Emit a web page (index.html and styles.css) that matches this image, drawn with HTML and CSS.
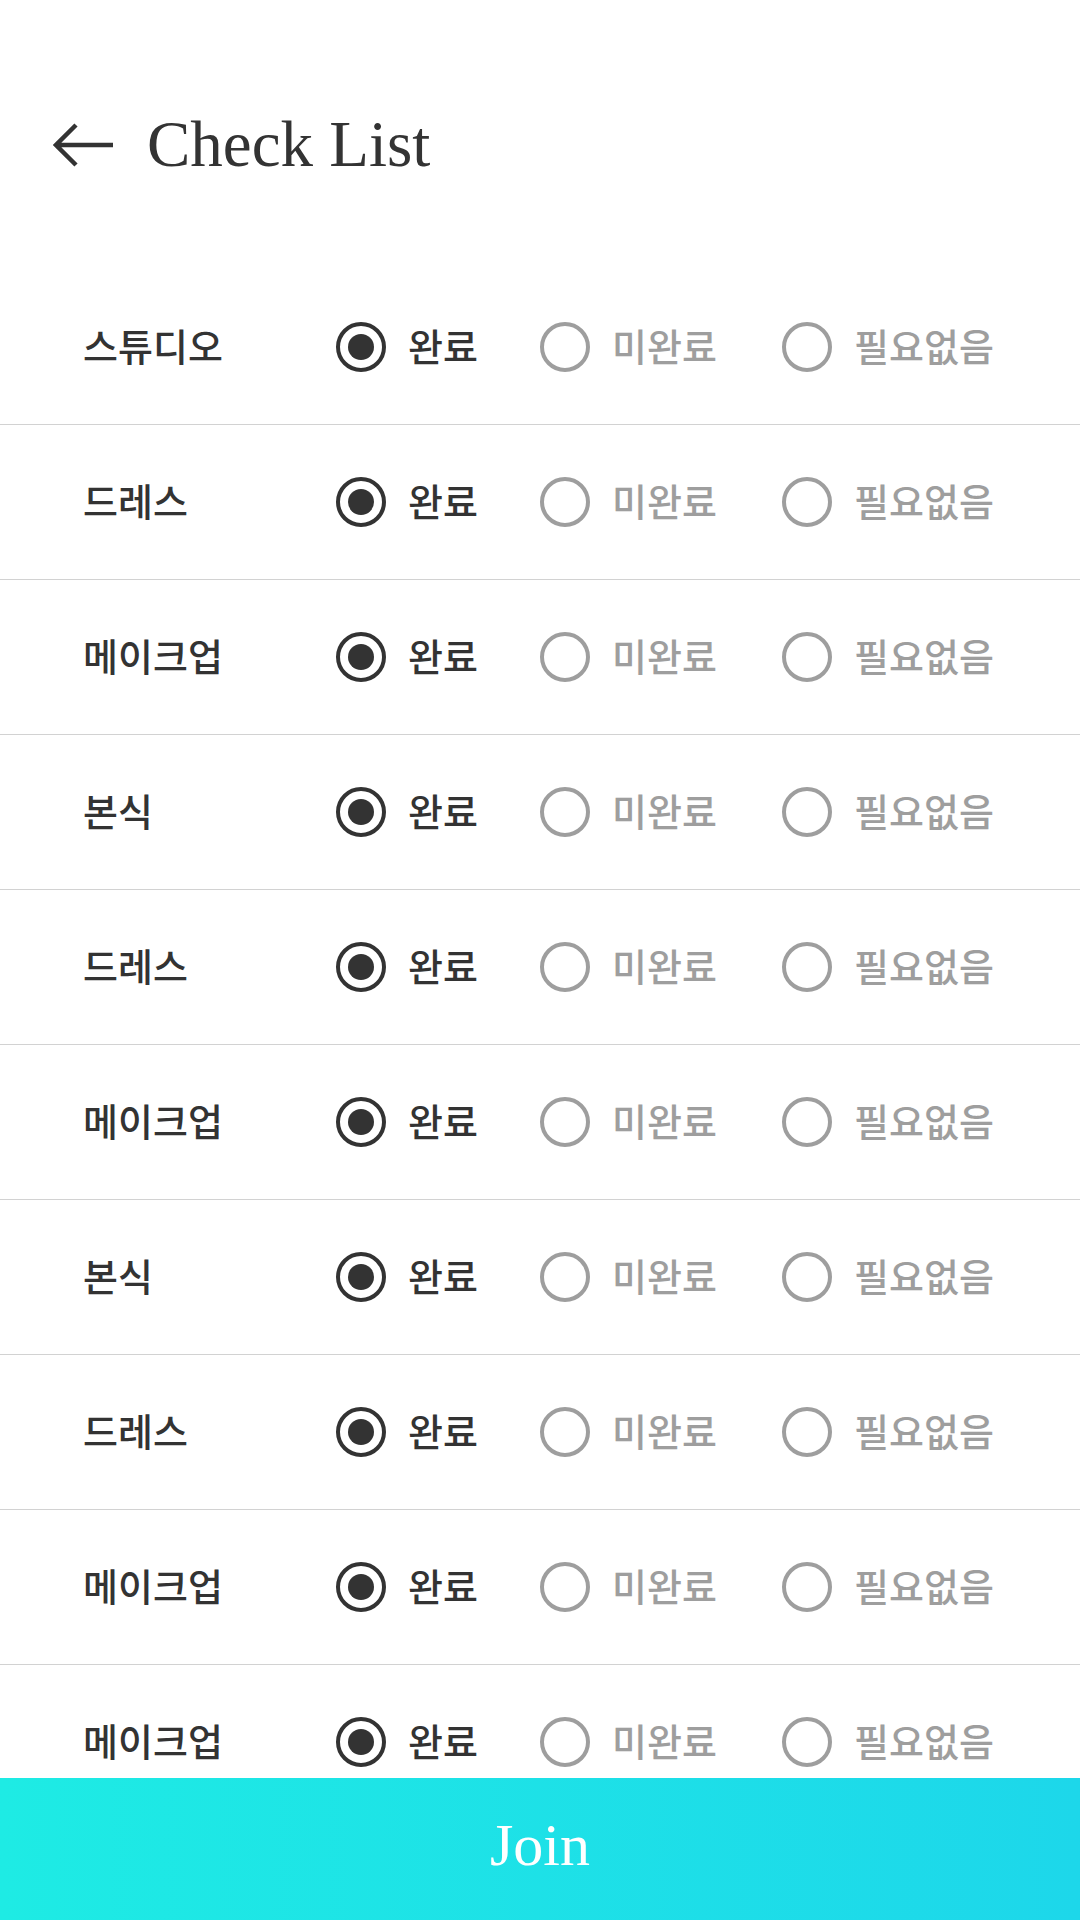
FILE: index.html
```html
<!DOCTYPE html>
<html lang="ko">
<head>
<meta charset="utf-8">
<title>Check List</title>
<link rel="stylesheet" href="styles.css">
</head>
<body>
<header class="header">
  <svg class="back" width="60" height="46" viewBox="0 0 60 46" aria-hidden="true">
    <path d="M60 23 H4 M23 3 L3 23 L23 43" fill="none" stroke="#333" stroke-width="4.5" stroke-linejoin="miter"/>
  </svg>
  <h1 class="title">Check List</h1>
</header>
<main class="list">
  <div class="row"><span class="label">스튜디오</span><span class="opt on"><i class="radio"></i><span class="txt">완료</span></span><span class="opt"><i class="radio"></i><span class="txt">미완료</span></span><span class="opt"><i class="radio"></i><span class="txt">필요없음</span></span></div>
  <div class="row"><span class="label">드레스</span><span class="opt on"><i class="radio"></i><span class="txt">완료</span></span><span class="opt"><i class="radio"></i><span class="txt">미완료</span></span><span class="opt"><i class="radio"></i><span class="txt">필요없음</span></span></div>
  <div class="row"><span class="label">메이크업</span><span class="opt on"><i class="radio"></i><span class="txt">완료</span></span><span class="opt"><i class="radio"></i><span class="txt">미완료</span></span><span class="opt"><i class="radio"></i><span class="txt">필요없음</span></span></div>
  <div class="row"><span class="label">본식</span><span class="opt on"><i class="radio"></i><span class="txt">완료</span></span><span class="opt"><i class="radio"></i><span class="txt">미완료</span></span><span class="opt"><i class="radio"></i><span class="txt">필요없음</span></span></div>
  <div class="row"><span class="label">드레스</span><span class="opt on"><i class="radio"></i><span class="txt">완료</span></span><span class="opt"><i class="radio"></i><span class="txt">미완료</span></span><span class="opt"><i class="radio"></i><span class="txt">필요없음</span></span></div>
  <div class="row"><span class="label">메이크업</span><span class="opt on"><i class="radio"></i><span class="txt">완료</span></span><span class="opt"><i class="radio"></i><span class="txt">미완료</span></span><span class="opt"><i class="radio"></i><span class="txt">필요없음</span></span></div>
  <div class="row"><span class="label">본식</span><span class="opt on"><i class="radio"></i><span class="txt">완료</span></span><span class="opt"><i class="radio"></i><span class="txt">미완료</span></span><span class="opt"><i class="radio"></i><span class="txt">필요없음</span></span></div>
  <div class="row"><span class="label">드레스</span><span class="opt on"><i class="radio"></i><span class="txt">완료</span></span><span class="opt"><i class="radio"></i><span class="txt">미완료</span></span><span class="opt"><i class="radio"></i><span class="txt">필요없음</span></span></div>
  <div class="row"><span class="label">메이크업</span><span class="opt on"><i class="radio"></i><span class="txt">완료</span></span><span class="opt"><i class="radio"></i><span class="txt">미완료</span></span><span class="opt"><i class="radio"></i><span class="txt">필요없음</span></span></div>
  <div class="row"><span class="label">메이크업</span><span class="opt on"><i class="radio"></i><span class="txt">완료</span></span><span class="opt"><i class="radio"></i><span class="txt">미완료</span></span><span class="opt"><i class="radio"></i><span class="txt">필요없음</span></span></div>
</main>
<button class="join" type="button">Join</button>
</body>
</html>
```
FILE: styles.css
```css
* { box-sizing: border-box; }
html, body { margin: 0; padding: 0; background: #fff; }
body {
  width: 1080px;
  height: 1920px;
  overflow: hidden;
  color: #333;
  font-family: "Noto Sans CJK KR", "Noto Sans", sans-serif;
}
.header {
  display: flex;
  align-items: center;
  height: 65px;
  margin: 112px 0 93px 0;
  padding-left: 53px;
}
.back { display: block; flex: none; }
.title {
  margin: 0 0 0 34px;
  font-family: "Liberation Serif", serif;
  font-weight: normal;
  font-size: 65px;
  line-height: 1;
  color: #333;
}
.list { display: flex; flex-direction: column; }
.row {
  display: grid;
  grid-template-columns: 253px 204px 242px 1fr;
  align-items: center;
  height: 155px;
  padding-left: 83px;
  border-bottom: 1.5px solid #d2d2d2;
  font-size: 38px;
  line-height: 1;
}
.label {
  color: #333;
  font-weight: 500;
  padding-bottom: 5px;
}
.opt {
  display: flex;
  align-items: center;
  color: #9e9e9e;
  font-weight: 500;
}
.opt.on { color: #333; }
.txt { padding-bottom: 5px; }
.radio {
  position: relative;
  flex: none;
  width: 50px;
  height: 50px;
  margin-right: 22px;
  border: 4.5px solid #9e9e9e;
  border-radius: 50%;
}
.opt.on .radio { border-color: #333; }
.opt.on .radio::after {
  content: "";
  position: absolute;
  left: 7.5px;
  top: 7.5px;
  width: 26px;
  height: 26px;
  border-radius: 50%;
  background: #333;
}
.join {
  position: fixed;
  left: 0;
  bottom: 0;
  width: 1080px;
  height: 142px;
  border: 0;
  margin: 0;
  padding: 0 0 8px 0;
  background: linear-gradient(to right, #1eebe4, #1dd7ea);
  color: #fff;
  font-family: "Liberation Serif", serif;
  font-size: 60px;
  line-height: 1;
}
```
